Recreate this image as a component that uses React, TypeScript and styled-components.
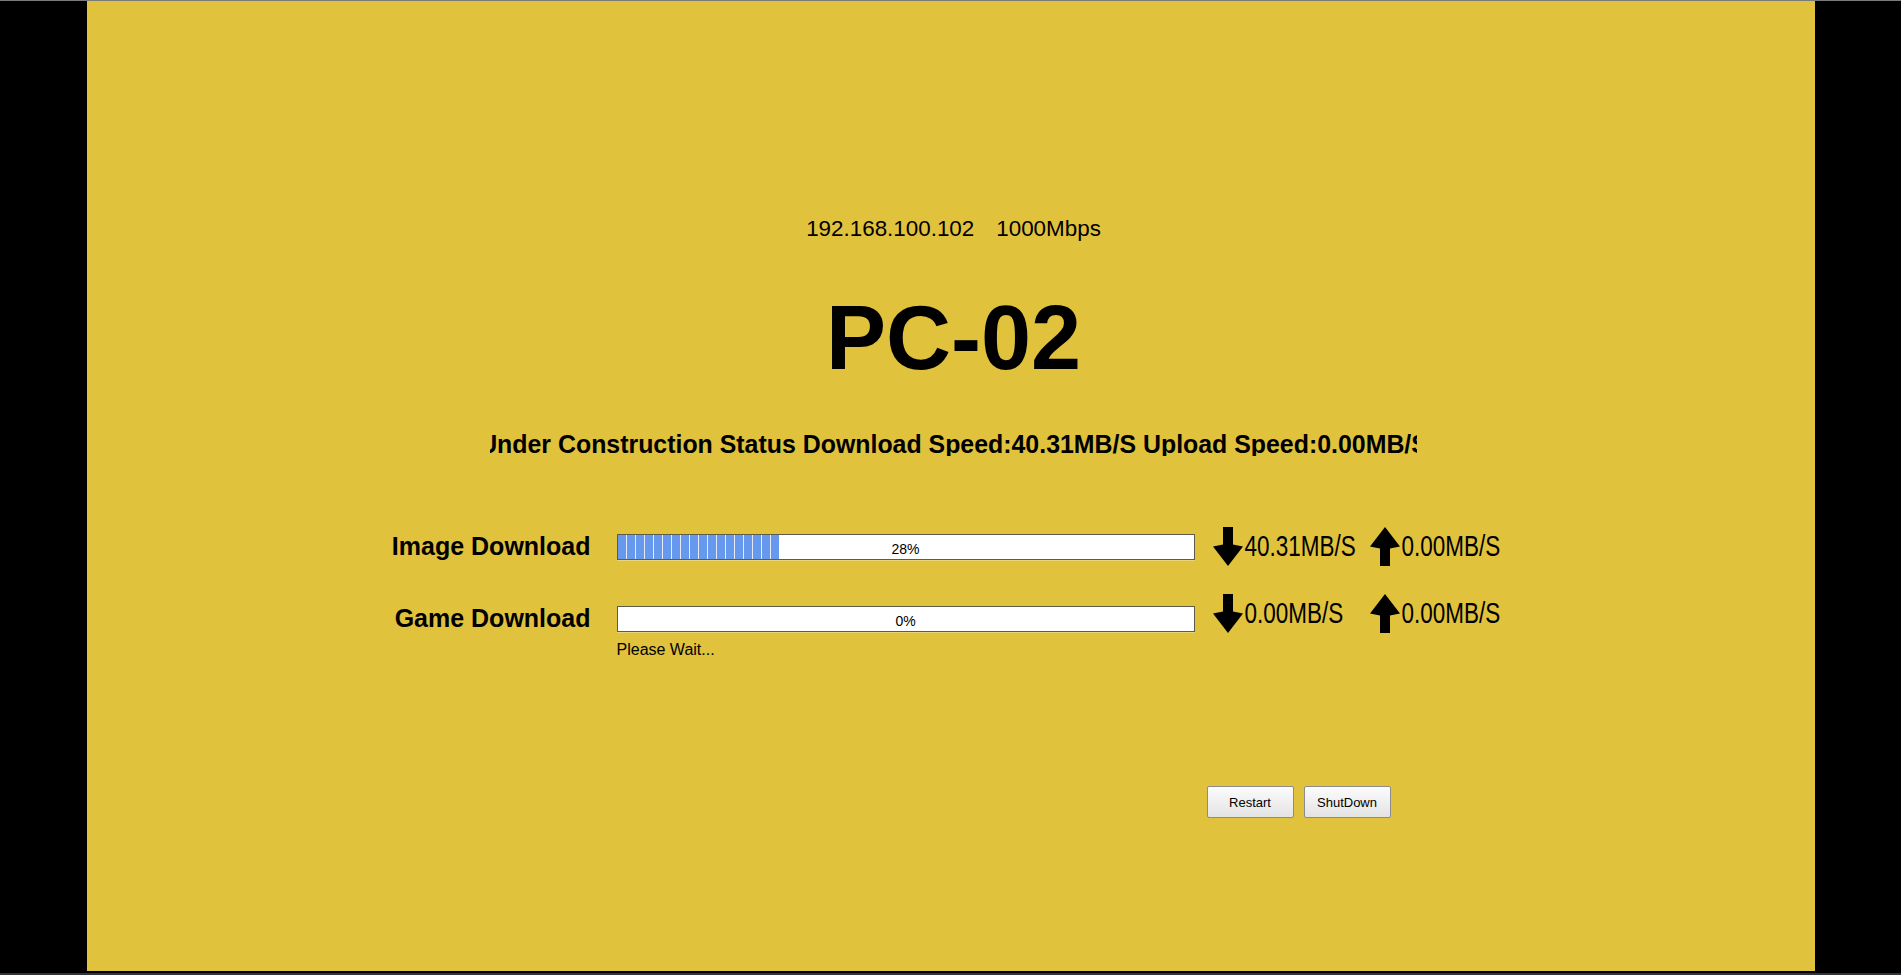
import React from 'react'
import styled, { createGlobalStyle } from 'styled-components'

const GlobalStyle = createGlobalStyle`
  html, body {
    margin: 0;
    padding: 0;
    background: #000;
  }
  body {
    font-family: 'Liberation Sans', Arial, sans-serif;
    color: #000;
  }
`

const Screen = styled.div`
  height: 975px;
  box-sizing: border-box;
  border-top: 1px solid #7a7a7a;
  border-bottom: 2px solid #30353a;
  display: flex;
  justify-content: center;
  overflow: hidden;
`

const Panel = styled.main`
  width: 1728px;
  height: 970px;
  box-sizing: border-box;
  padding: 217px 0 0 6px;
  background: #e0c23d;
  display: flex;
  flex-direction: column;
  align-items: center;
`

const HostLine = styled.div`
  display: flex;
  gap: 22px;
  font-size: 22.4px;
  line-height: 22px;
`

const Title = styled.h1`
  margin: 53px 0 0;
  font-size: 90px;
  line-height: 90px;
  font-weight: bold;
`

const Ticker = styled.div`
  width: 927px;
  margin: 49px 0 0;
  overflow: hidden;
  display: flex;
  justify-content: center;
  white-space: nowrap;
  font-size: 24.9px;
  line-height: 24px;
  font-weight: bold;
  span {
    flex-shrink: 0;
  }
`

const Transfers = styled.section`
  width: 1126px;
  box-sizing: border-box;
  padding-right: 16px;
  margin-top: 71px;
  display: flex;
  flex-direction: column;
`

const Row = styled.div`
  display: flex;
  align-items: center;
  height: 39px;
  & + & {
    margin-top: 33px;
  }
`

const Label = styled.div`
  width: 200px;
  margin-right: 26px;
  text-align: right;
  font-size: 25px;
  line-height: 25px;
  font-weight: bold;
  white-space: nowrap;
`

const Track = styled.div`
  position: relative;
  width: 578px;
  height: 26px;
  margin-right: 18px;
  box-sizing: border-box;
  border: 1px solid #5f5b4a;
  background: #fff;
  box-shadow: 0 1px 0 rgba(255, 255, 255, 0.3);
`

const Fill = styled.div`
  height: 100%;
  background: repeating-linear-gradient(90deg, #6699ee 0 8px, #e2eafb 8px 9px);
`

const Percent = styled.span`
  position: absolute;
  inset: 0;
  padding-top: 5px;
  display: flex;
  align-items: center;
  justify-content: center;
  font-size: 14px;
`

const Speed = styled.div<{ $w: number; $lift: number }>`
  display: flex;
  align-items: center;
  width: ${(p) => p.$w}px;
  margin-bottom: ${(p) => p.$lift * 2}px;
`

const Rate = styled.span`
  display: inline-block;
  margin-left: 2px;
  font-size: 22.5px;
  line-height: 22px;
  transform: scaleY(1.3);
  white-space: nowrap;
`

const Notice = styled.div`
  margin: 3.5px 0 0 226px;
  font-size: 16px;
  line-height: 16px;
`

const Actions = styled.div`
  width: 1126px;
  box-sizing: border-box;
  padding-left: 816px;
  margin-top: 128.5px;
  display: flex;
  gap: 10px;
`

const Button = styled.button`
  width: 87px;
  height: 32px;
  padding: 0;
  border: 1px solid #8c8c8c;
  border-radius: 2px;
  background: linear-gradient(#fcfcfc, #e3e3e3);
  font-family: 'Liberation Sans', Arial, sans-serif;
  font-size: 13px;
  color: #000;
`

const Arrow = ({ up }: { up?: boolean }) => (
  <svg width='30' height='39' viewBox='0 0 30 39' style={{ flexShrink: 0 }}>
    <path
      fill='#000'
      d={up ? 'M10 39H20V21.5L30 19.5L15 0L0 19.5L10 21.5Z' : 'M10 0H20V17.5L30 19.5L15 39L0 19.5L10 17.5Z'}
    />
  </svg>
)

interface transfer {
  name: string
  percent: number
  down: string
  up: string
  lift: number
}

const transfers: transfer[] = [
  { name: 'Image Download', percent: 28, down: '40.31MB/S', up: '0.00MB/S', lift: 0 },
  { name: 'Game Download', percent: 0, down: '0.00MB/S', up: '0.00MB/S', lift: 5 }
]

const App = () => {
  return (
    <>
      <GlobalStyle />
      <Screen>
        <Panel>
          <HostLine>
            <span>192.168.100.102</span>
            <span>1000Mbps</span>
          </HostLine>
          <Title>PC-02</Title>
          <Ticker>
            <span>Under Construction Status Download Speed:40.31MB/S Upload Speed:0.00MB/S</span>
          </Ticker>
          <Transfers>
            {transfers.map((t) => (
              <Row key={t.name}>
                <Label>{t.name}</Label>
                <Track>
                  <Fill style={{ width: `${t.percent}%` }} />
                  <Percent>{t.percent}%</Percent>
                </Track>
                <Speed $w={157} $lift={t.lift}>
                  <Arrow />
                  <Rate>{t.down}</Rate>
                </Speed>
                <Speed $w={131} $lift={t.lift}>
                  <Arrow up />
                  <Rate>{t.up}</Rate>
                </Speed>
              </Row>
            ))}
            <Notice>Please Wait...</Notice>
          </Transfers>
          <Actions>
            <Button>Restart</Button>
            <Button>ShutDown</Button>
          </Actions>
        </Panel>
      </Screen>
    </>
  )
}

export default App
